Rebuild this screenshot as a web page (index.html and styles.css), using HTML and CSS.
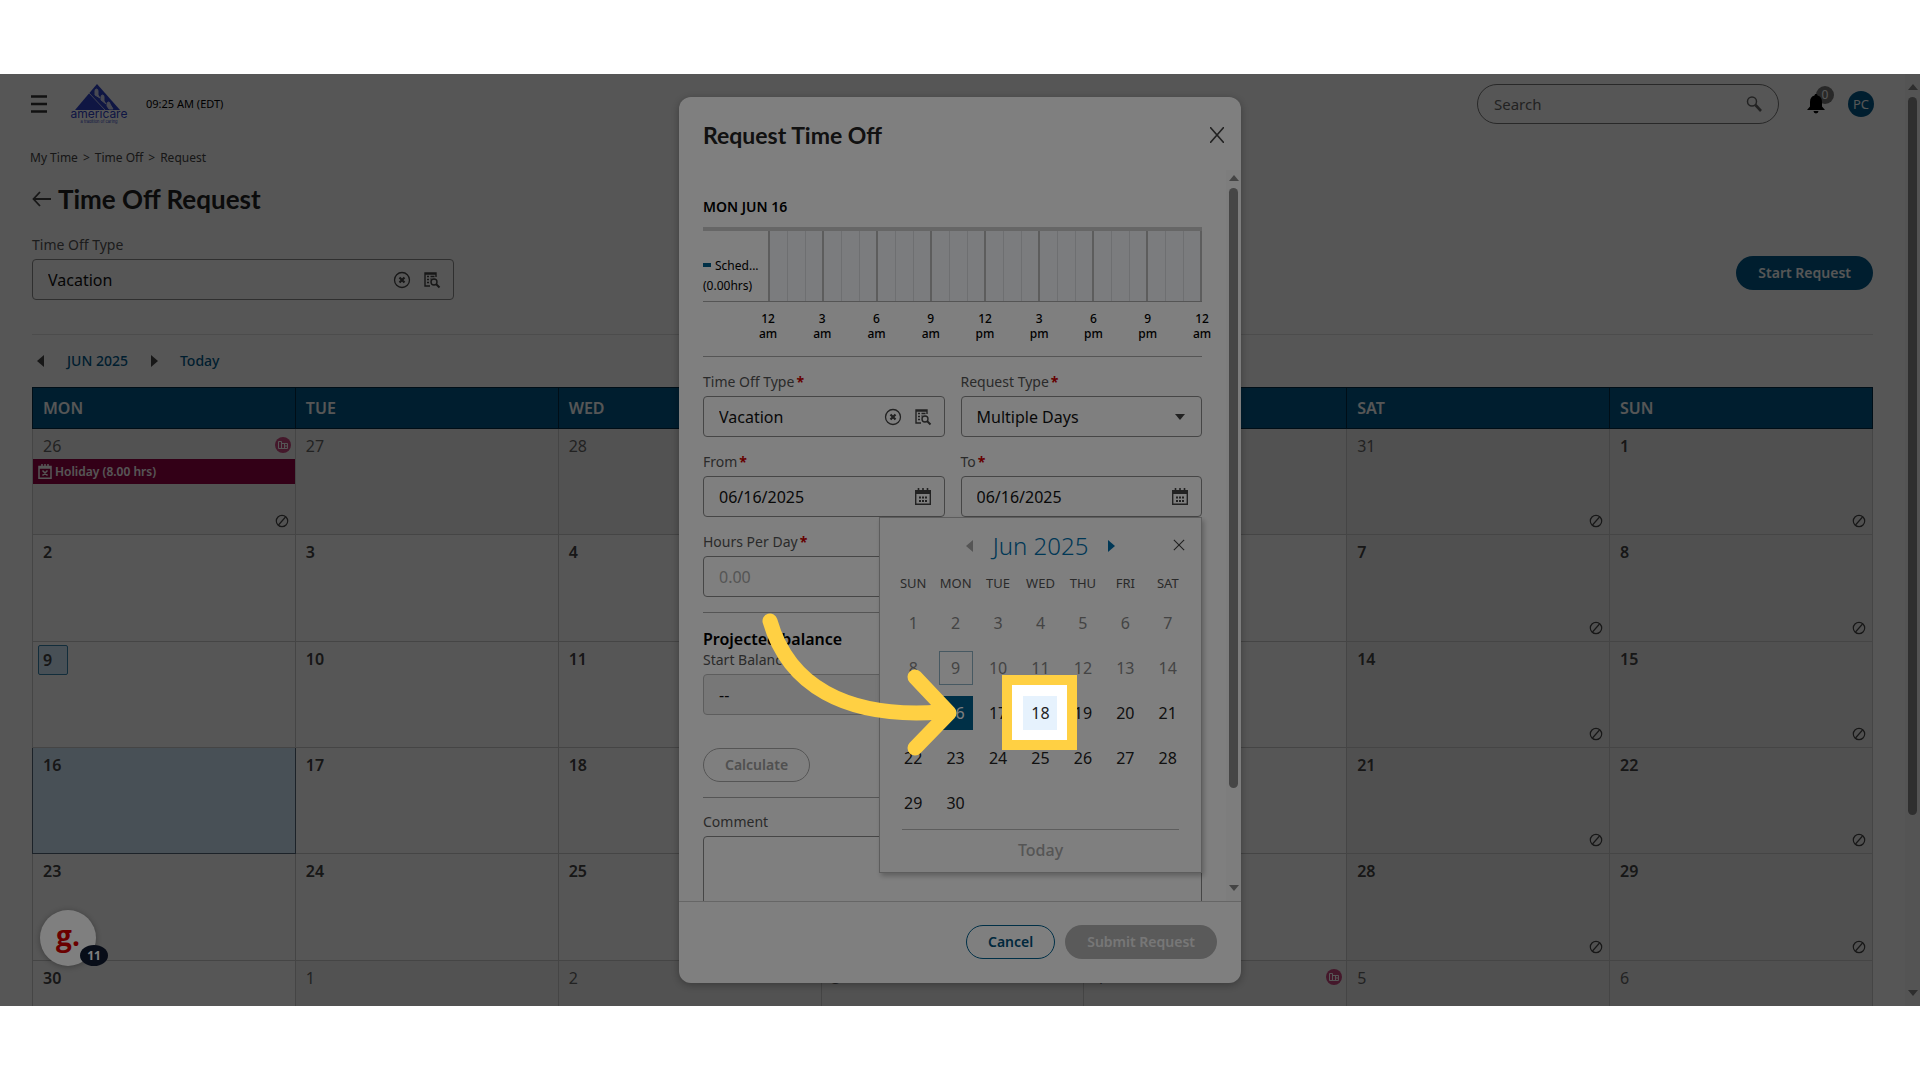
FILE: index.html
```html
<!DOCTYPE html>
<html lang="en">
<head>
<meta charset="utf-8">
<meta name="viewport" content="width=device-width, initial-scale=1">
<title>Time Off Request</title>
<link rel="stylesheet" href="styles.css">
</head>
<body>
<svg class="sprite" aria-hidden="true">
  <symbol id="i-clear" viewBox="0 0 18 18"><circle cx="9" cy="9" r="7.5" fill="none" stroke="currentColor" stroke-width="1.3"/><path d="M6.5 6.5l5 5M11.5 6.5l-5 5" stroke="currentColor" stroke-width="2.2"/></symbol>
  <symbol id="i-lookup" viewBox="0 0 18 18"><path d="M7 15H2V2h11v4M2 3h11" fill="none" stroke="currentColor" stroke-width="1.4"/><path d="M4 5.5h2M7.500 5.500h4M4 8.500h2M4 11.500h2M7.500 8h1" stroke="currentColor" stroke-width="1.400"/><circle cx="11" cy="11" r="3" fill="none" stroke="currentColor" stroke-width="1.400"/><path d="M13 13l3.500 3.500" stroke="currentColor" stroke-width="2"/></symbol>
  <symbol id="i-cal" viewBox="0 0 18 18"><path d="M1 2h16v4H1z" fill="currentColor"/><path d="M1.700 4v12.300h14.600V4" fill="none" stroke="currentColor" stroke-width="1.400"/><path d="M4.500 0v3M9 0v3M13.500 0v3" stroke="currentColor" stroke-width="1.600"/><path d="M5 9.500h2M8 9.500h2M11 9.500h2M5 13h2M8 13h2M11 13h2" stroke="currentColor" stroke-width="2.200"/></symbol>
  <symbol id="i-none" viewBox="0 0 14 14"><circle cx="7" cy="7" r="5.700" fill="none" stroke="currentColor" stroke-width="1.200"/><path d="M3.500 11L10.500 3" stroke="currentColor" stroke-width="1.200"/></symbol>
  <symbol id="i-hol" viewBox="0 0 16 16"><circle cx="8" cy="8" r="8" fill="#c9487f"/><path d="M3.500 11.500v-7h3v7M3.500 11.500h9v-5h-6M9.500 6.500v5M9.500 9h3" fill="none" stroke="#fff" stroke-width="1"/></symbol>
  <symbol id="i-x" viewBox="0 0 14 14"><path d="M1 1l12 12M13 1L1 13" stroke="currentColor" stroke-width="1.300"/></symbol>
  <symbol id="i-left" viewBox="0 0 8 12"><path d="M7 0v12L0 6z" fill="currentColor"/></symbol>
  <symbol id="i-right" viewBox="0 0 8 12"><path d="M1 0v12l7-6z" fill="currentColor"/></symbol>
  <symbol id="i-up" viewBox="0 0 10 6"><path d="M0 6h10L5 0z" fill="currentColor"/></symbol>
  <symbol id="i-down" viewBox="0 0 10 6"><path d="M0 0h10L5 6z" fill="currentColor"/></symbol>
</svg>
<div class="screen">
  <main class="page">
    <header class="topbar">
      <button class="icon-btn menu" aria-label="Menu"><svg width="16" height="18" viewBox="0 0 16 18"><path d="M0 1.500h16M0 9h16M0 16.500h16" stroke="currentColor" stroke-width="2.600"/></svg></button>
      <svg class="logo" width="62" height="42" viewBox="0 0 62 42" role="img" aria-label="americare">
        <path d="M6 27L28 1l23 26z" fill="#2d41c8"/>
        <path d="M20 10l16 17" stroke="#fff" stroke-width="1" opacity=".7"/>
        <path d="M26 12V8q0-2 1.500-2T29 8v4l2 3zM32 17v-3q0-2 1.500-2t1.500 2v4l2 3zM38 23v-2q0-2 1.500-2t1.500 2l3 5h-4z" fill="#fff" stroke="#fff" opacity=".8"/>
        <text x="30" y="35" text-anchor="middle" class="logo-name">americare</text>
        <text x="30" y="40" text-anchor="middle" class="logo-tag">a tradition of caring</text>
      </svg>
      <span class="clock">09:25 AM (EDT)</span>
      <label class="search"><input type="text" placeholder="Search" aria-label="Search">
        <svg width="18" height="18" viewBox="0 0 18 18"><circle cx="7" cy="6.500" r="4.500" fill="none" stroke="currentColor" stroke-width="1.500"/><path d="M10.500 10l5.500 6" stroke="currentColor" stroke-width="2.600"/></svg></label>
      <button class="icon-btn bell" aria-label="Notifications"><svg width="18" height="20" viewBox="0 0 18 20"><path d="M9 0c1 0 1.500.7 1.500 1.500C13.500 2 15 4.500 15 8v4.500l3 3.500H0l3-3.500V8c0-3.500 1.500-6 4.500-6.500C7.500.7 8 0 9 0zM6.500 17h5a2.500 2.500 0 0 1-5 0z" fill="currentColor"/></svg><span class="count">0</span></button>
      <button class="avatar">PC</button>
    </header>
    <nav class="crumbs"><a href="#">My Time</a><span>&gt;</span><a href="#">Time Off</a><span>&gt;</span><a href="#">Request</a></nav>
    <div class="title-row">
      <button class="icon-btn" aria-label="Back"><svg width="20" height="16" viewBox="0 0 20 16"><path d="M8 1L1.500 8 8 15M2 8h17" fill="none" stroke="currentColor" stroke-width="1.800"/></svg></button>
      <h1>Time Off Request</h1>
    </div>
    <div class="filters">
      <div class="field type-filter">
        <label for="type">Time Off Type</label>
        <div class="control"><input id="type" type="text" value="Vacation"><svg width="18" height="18"><use href="#i-clear"/></svg><svg width="18" height="18"><use href="#i-lookup"/></svg></div>
      </div>
      <button class="pill primary">Start Request</button>
    </div>
    <div class="month-nav">
      <button class="icon-btn" aria-label="Previous month"><svg width="8" height="12"><use href="#i-left"/></svg></button>
      <a href="#">JUN 2025</a>
      <button class="icon-btn" aria-label="Next month"><svg width="8" height="12"><use href="#i-right"/></svg></button>
      <a href="#">Today</a>
    </div>
    <table class="month">
      <thead><tr><th>MON</th><th>TUE</th><th>WED</th><th>THU</th><th>FRI</th><th>SAT</th><th>SUN</th></tr></thead>
      <tbody>
        <tr><td class="out"><span class="num">26</span><svg class="hol"><use href="#i-hol"/></svg>
          <div class="event"><svg width="14" height="15" viewBox="0 0 14 15"><path d="M1 2.500h12v11.800H1zM1 4h12M4 0v3M7 0v3M10 0v3M4.500 6.500l5 5M9.500 6.500l-5 5" fill="none" stroke="currentColor" stroke-width="1.500"/></svg>Holiday (8.00 hrs)</div>
          <svg class="none"><use href="#i-none"/></svg></td>
          <td class="out"><span class="num">27</span></td><td class="out"><span class="num">28</span></td><td class="out"><span class="num">29</span></td><td class="out"><span class="num">30</span></td>
          <td class="out off"><span class="num">31</span><svg class="none"><use href="#i-none"/></svg></td><td class="off"><span class="num">1</span><svg class="none"><use href="#i-none"/></svg></td></tr>
        <tr><td><span class="num">2</span></td><td><span class="num">3</span></td><td><span class="num">4</span></td><td><span class="num">5</span></td><td><span class="num">6</span></td>
          <td class="off"><span class="num">7</span><svg class="none"><use href="#i-none"/></svg></td><td class="off"><span class="num">8</span><svg class="none"><use href="#i-none"/></svg></td></tr>
        <tr><td><span class="num today">9</span></td><td><span class="num">10</span></td><td><span class="num">11</span></td><td><span class="num">12</span></td><td><span class="num">13</span></td>
          <td class="off"><span class="num">14</span><svg class="none"><use href="#i-none"/></svg></td><td class="off"><span class="num">15</span><svg class="none"><use href="#i-none"/></svg></td></tr>
        <tr><td class="picked"><span class="num">16</span></td><td><span class="num">17</span></td><td><span class="num">18</span></td><td><span class="num">19</span></td><td><span class="num">20</span></td>
          <td class="off"><span class="num">21</span><svg class="none"><use href="#i-none"/></svg></td><td class="off"><span class="num">22</span><svg class="none"><use href="#i-none"/></svg></td></tr>
        <tr><td><span class="num">23</span></td><td><span class="num">24</span></td><td><span class="num">25</span></td><td><span class="num">26</span></td><td><span class="num">27</span></td>
          <td class="off"><span class="num">28</span><svg class="none"><use href="#i-none"/></svg></td><td class="off"><span class="num">29</span><svg class="none"><use href="#i-none"/></svg></td></tr>
        <tr><td><span class="num">30</span></td><td class="out"><span class="num">1</span></td><td class="out"><span class="num">2</span></td><td class="out"><span class="num">3</span></td><td class="out"><span class="num">4</span><svg class="hol"><use href="#i-hol"/></svg></td>
          <td class="out off"><span class="num">5</span></td><td class="out off"><span class="num">6</span></td></tr>
      </tbody>
    </table>
  </main>
  <div class="scrollbar page-scroll"><svg width="10" height="6"><use href="#i-up"/></svg><div class="track"><div class="thumb"></div></div><svg width="10" height="6"><use href="#i-down"/></svg></div>

  <div class="backdrop">
    <section class="modal" role="dialog" aria-labelledby="dlg-title">
      <header class="modal-head"><h2 id="dlg-title">Request Time Off</h2><button class="icon-btn" aria-label="Close"><svg width="14" height="16" viewBox="0 0 14 14" preserveAspectRatio="none"><path d="M0 0l14 14M14 0L0 14" stroke="currentColor" stroke-width="1.500"/></svg></button></header>
      <div class="modal-main">
        <form class="modal-body">
          <h3 class="day">MON JUN 16</h3>
          <div class="chart">
            <div class="legend"><span class="series">Sched...</span><span>(0.00hrs)</span></div>
            <div class="hours"><i></i><i></i><i></i><i></i><i></i><i></i><i></i><i></i></div>
          </div>
          <div class="ticks"><span>12<br>am</span><span>3<br>am</span><span>6<br>am</span><span>9<br>am</span><span>12<br>pm</span><span>3<br>pm</span><span>6<br>pm</span><span>9<br>pm</span><span>12<br>am</span></div>
          <hr>
          <div class="grid">
            <div class="field"><label for="m-type">Time Off Type<b>*</b></label>
              <div class="control"><input id="m-type" type="text" value="Vacation"><svg width="18" height="18"><use href="#i-clear"/></svg><svg width="18" height="18"><use href="#i-lookup"/></svg></div></div>
            <div class="field"><label for="m-req">Request Type<b>*</b></label>
              <div class="control drop"><select id="m-req"><option>Multiple Days</option></select><svg width="10" height="6"><use href="#i-down"/></svg></div></div>
            <div class="field"><label for="m-from">From<b>*</b></label>
              <div class="control"><input id="m-from" type="text" value="06/16/2025"><svg width="18" height="18"><use href="#i-cal"/></svg></div></div>
            <div class="field anchor"><label for="m-to">To<b>*</b></label>
              <div class="control"><input id="m-to" type="text" value="06/16/2025"><svg width="18" height="18"><use href="#i-cal"/></svg></div>
              <div class="picker">
                <div class="picker-head"><button type="button" class="icon-btn dim" aria-label="Previous"><svg width="8" height="12"><use href="#i-left"/></svg></button><span class="picker-month">Jun 2025</span><button type="button" class="icon-btn next" aria-label="Next"><svg width="8" height="12"><use href="#i-right"/></svg></button><button type="button" class="icon-btn close" aria-label="Close calendar"><svg width="12" height="12"><use href="#i-x"/></svg></button></div>
                <div class="week"><span>SUN</span><span>MON</span><span>TUE</span><span>WED</span><span>THU</span><span>FRI</span><span>SAT</span></div>
                <div class="days">
                  <button type="button" disabled>1</button><button type="button" disabled>2</button><button type="button" disabled>3</button><button type="button" disabled>4</button><button type="button" disabled>5</button><button type="button" disabled>6</button><button type="button" disabled>7</button>
                  <button type="button" disabled>8</button><button type="button" disabled class="now">9</button><button type="button" disabled>10</button><button type="button" disabled>11</button><button type="button" disabled>12</button><button type="button" disabled>13</button><button type="button" disabled>14</button>
                  <button type="button" disabled>15</button><button type="button" class="sel">16</button><button type="button">17</button><button type="button" class="hover">18</button><button type="button">19</button><button type="button">20</button><button type="button">21</button>
                  <button type="button">22</button><button type="button">23</button><button type="button">24</button><button type="button">25</button><button type="button">26</button><button type="button">27</button><button type="button">28</button>
                  <button type="button">29</button><button type="button">30</button>
                </div>
                <div class="picker-foot"><button type="button" disabled>Today</button></div>
              </div></div>
            <div class="field"><label for="m-hours">Hours Per Day<b>*</b></label>
              <div class="control"><input id="m-hours" type="text" placeholder="0.00"></div></div>
          </div>
          <hr>
          <h3 class="projected">Projected balance</h3>
          <div class="field balance"><label for="m-start">Start Balance</label>
            <div class="control disabled"><input id="m-start" type="text" value="--" disabled></div></div>
          <button type="button" class="pill calc" disabled>Calculate</button>
          <hr>
          <div class="field"><label for="m-comment">Comment</label><textarea id="m-comment" rows="5"></textarea></div>
        </form>
        <div class="scrollbar modal-scroll"><svg width="10" height="6"><use href="#i-up"/></svg><div class="track"><div class="thumb"></div></div><svg width="10" height="6"><use href="#i-down"/></svg></div>
      </div>
      <footer class="modal-foot"><button class="pill outline">Cancel</button><button class="pill muted" disabled>Submit Request</button></footer>
    </section>
  </div>

  <button class="launcher" aria-label="Guides">g.<span>11</span></button>

  <div class="tour">
    <div class="spot"></div>
    <svg class="arrow" width="200" height="156" viewBox="0 0 200 156"><path d="M10 11C28 74 84 109 180 102" fill="none" stroke="#ffd043" stroke-width="15" stroke-linecap="round"/><path d="M155 67l34 36-34 35" fill="none" stroke="#ffd043" stroke-width="15" stroke-linecap="round" stroke-linejoin="round"/></svg>
  </div>
</div>
</body>
</html>
```
FILE: styles.css
```css
* { box-sizing: border-box; }
body { margin: 0; padding: 74px 0; background: #fff; color: #222; font: 16px/20px "Noto Sans", sans-serif; }
h1, h2, h3 { margin: 0; }
button, input, select, textarea { font: inherit; color: inherit; }
a { color: inherit; text-decoration: none; }
svg { display: block; flex: none; }
.sprite { position: absolute; width: 0; height: 0; }
.icon-btn { display: flex; align-items: center; justify-content: center; padding: 0; border: 0; background: none; color: #444; }

.screen { position: relative; display: flex; height: calc(100vh - 148px); overflow: hidden; }
.page { flex: 1; min-width: 0; padding: 10px 32px; }

/* top bar */
.topbar { display: flex; align-items: center; height: 40px; }
.menu { margin: 0 22px 0 -1px; color: #333; }
.logo-name { font: 12px Inter, sans-serif; fill: #2d41c8; }
.logo-tag { font: 4px Inter, sans-serif; fill: #2d41c8; }
.clock { margin-left: 15px; font-size: 11px; color: #000; }
.search { display: flex; align-items: center; width: 302px; height: 40px; margin-left: auto; padding: 0 15px 0 16px; border: 1px solid #777; border-radius: 20px; color: #666; }
.search input { flex: 1; min-width: 0; padding: 0; border: 0; outline: 0; background: none; font-size: 15px; }
.search input::placeholder { color: #666; opacity: 1; }
.bell { position: relative; z-index: 0; margin: 0 23px 0 28px; color: #000; }
.count { position: absolute; z-index: -1; left: 9px; top: -8px; width: 18px; height: 18px; border-radius: 50%; background: #777; color: #fff; font-size: 12px; line-height: 18px; }
.avatar { width: 26px; height: 26px; margin-right: -1px; padding: 0; border: 0; border-radius: 50%; background: #005b8d; color: #fff; font-size: 13px; }
.crumbs { display: flex; gap: 5px; margin-top: 24px; margin-left: -2px; font-size: 12px; color: #444; }
.title-row { display: flex; align-items: center; gap: 6px; height: 32px; margin-top: 15px; }
h1 { font: 700 26px/32px Lato, sans-serif; }

/* fields */
.field { display: flex; flex-direction: column; gap: 5px; min-width: 0; }
.field label { font-size: 14px; line-height: 18px; color: #555; }
.field label b { margin-left: 2px; color: #c00; }
.control { display: flex; align-items: center; gap: 12px; height: 41px; padding: 0 12px 0 15px; border: 1px solid #8c8c8c; border-radius: 4px; color: #444; }
.control input, .control select { flex: 1; min-width: 0; width: 100%; padding: 0; border: 0; outline: 0; background: none; color: #111; appearance: none; }
.control input::placeholder { color: #aaa; opacity: 1; }
.drop { padding-right: 16px; }
.disabled { border-color: #bbb; background: #eee; }
textarea { resize: none; border: 1px solid #8c8c8c; border-radius: 4px; background: none; }
.filters { display: flex; align-items: flex-end; justify-content: space-between; margin-top: 21px; padding-bottom: 34px; border-bottom: 1px solid #e2e2e2; }
.type-filter { width: 422px; }
.filters .pill { margin-bottom: 10px; }
.pill { height: 34px; padding: 0 21px; border: 1px solid transparent; border-radius: 17px; background: none; font-size: 14px; font-weight: 600; line-height: 20px; }
.primary { background: #005b8d; color: #fff; }

/* month calendar */
.month-nav { display: flex; align-items: center; gap: 22px; margin: 16px 0; padding-left: 5px; font-size: 14px; font-weight: 500; color: #005b8d; }
.month { width: 100%; height: 680px; table-layout: fixed; border-collapse: collapse; }
.month th { height: 41px; padding: 0 10px; border: 1px solid #002c45; background: #005b8d; color: #fff; font-weight: 600; text-align: left; }
.month td { position: relative; height: 106px; padding: 0; border: 1px solid #ccc; vertical-align: top; font-weight: 600; color: #444; }
.month .num { display: block; padding: 7px 10px 3px; }
.month .out { background: #f4f4f4; font-weight: 400; color: #666; }
.month .off { background: #eee; }
.month .picked { border: 1px solid #556677; background: #d6ecff; }
.month .today { width: 30px; margin: 3px 5px; padding: 4px; border: 1px solid #3586ae; border-radius: 2px; background: #d6ecff; }
.none { position: absolute; right: 6px; bottom: 6px; width: 14px; height: 14px; color: #444; }
.hol { position: absolute; right: 4px; top: 8px; width: 16px; height: 16px; }
.event { display: flex; align-items: center; gap: 3px; height: 25px; padding-left: 5px; background: #990046; color: #fff; font-size: 12px; font-weight: 600; }

/* scroll bars */
.scrollbar { display: flex; flex-direction: column; align-items: center; gap: 7px; width: 15px; padding: 10px 0; background: #fafafa; color: #888; }
.track { flex: 1; }
.thumb { width: 9px; border-radius: 5px; background: #8c8c8c; }
.page-scroll .thumb { height: 81%; }
.modal-scroll { padding: 5px 0 10px; }
.modal-scroll .thumb { height: 87%; }

/* dialog */
.backdrop { position: absolute; inset: 0; display: flex; justify-content: center; padding: 23px 0; background: rgba(0, 0, 0, .32); }
.modal { display: flex; flex-direction: column; width: 562px; max-width: 100%; border-radius: 12px; background: #fff; box-shadow: 0 2px 8px rgba(0, 0, 0, .3); }
.modal-head { display: flex; align-items: center; justify-content: space-between; height: 73px; padding: 3px 17px 0 24px; }
h2 { font: 700 23px/28px Lato, sans-serif; }
.modal-main { display: flex; flex: 1; min-height: 0; }
.modal-body { flex: 1; min-width: 0; padding: 27px 24px 0; overflow: hidden; }
.day { margin-bottom: 10px; font-size: 14px; font-weight: 600; line-height: 20px; color: #000; }
.chart { display: flex; height: 75px; border-top: 4px solid #ccc; border-bottom: 1px solid #aaa; }
.legend { display: flex; flex-direction: column; justify-content: flex-end; width: 65px; padding-bottom: 5px; font-size: 12px; color: #000; }
.series::before { content: ""; display: inline-block; width: 8px; height: 4px; margin: 0 4px 4px 0; background: #00608f; vertical-align: middle; }
.hours { display: grid; flex: 1; grid-template-columns: repeat(8, 1fr); border-right: 2px solid #bbb; background: #f6f9fd; }
.hours i { border-left: 2px solid #bbb; background: repeating-linear-gradient(90deg, transparent 0 17px, #dcdee2 17px 18px); }
.ticks { display: flex; justify-content: space-between; margin: 9px -13px 13px 52px; font-size: 12px; line-height: 15px; font-weight: 500; text-align: center; color: #000; }
.ticks span { width: 26px; }
hr { height: 1px; margin: 15px 0; border: 0; background: #aaa; }
.ticks + hr { margin-bottom: 16px; }
.grid + hr { margin-bottom: 16px; }
.grid { display: grid; grid-template-columns: 1fr 1fr; gap: 16px; }
.anchor { position: relative; }
.projected { margin-bottom: 2px; font-size: 16px; font-weight: 600; line-height: 20px; color: #000; }
.balance { width: 242px; }
.calc { margin-top: 33px; border-color: #aaa; color: #a0a0a0; }
.modal-foot { display: flex; align-items: center; justify-content: flex-end; gap: 10px; height: 82px; padding: 0 24px 1px; border-top: 1px solid #ccc; }
.outline { border-color: #00608f; color: #00507a; }
.muted { background: #b4b4b4; color: #eee; }

/* date picker */
.picker { position: absolute; z-index: 1; right: 0; top: 100%; width: 323px; padding: 10px 12px; border: 1px solid #bbb; background: #fff; box-shadow: 2px 3px 5px rgba(0, 0, 0, .25); }
.picker-head { position: relative; display: flex; align-items: center; justify-content: center; gap: 19px; height: 36px; }
.picker-head .dim { color: #aaa; }
.picker-head .next { color: #0070ad; }
.picker-head .close { position: absolute; right: 4px; top: 11px; }
.picker-month { font-size: 24px; font-weight: 300; line-height: 32px; color: #0070ad; }
.week, .days { display: grid; grid-template-columns: repeat(7, 1fr); text-align: center; }
.week { margin: 9px 0 7px; font-size: 13px; color: #555; }
.days { grid-auto-rows: 45px; place-items: center; }
.days button { width: 34px; height: 34px; padding: 0; border: 1px solid transparent; background: none; color: #222; }
.days button:disabled { color: #888; }
.days .now { border-color: #8fb3c4; }
.days .sel { background: #00608f; color: #fff; }
.days .hover { background: #e6f2fd; }
.picker-foot { margin: 4px 10px 0; padding-top: 8px; border-top: 1px solid #bbb; text-align: center; }
.picker-foot button { padding: 0; border: 0; background: none; color: #aaa; font-weight: 500; line-height: 24px; }

/* floating guide button */
.launcher { position: absolute; left: 40px; bottom: 40px; width: 56px; height: 56px; padding: 0 0 6px; border: 0; border-radius: 50%; background: #fff; color: #d40000; font: 700 28px/40px "Open Sans", sans-serif; box-shadow: 0 1px 6px rgba(0, 0, 0, .3); }
.launcher span { position: absolute; left: 40px; bottom: 0; width: 28px; height: 21px; border-radius: 50%; background: #101a30; color: #fff; font-size: 12px; line-height: 21px; }

/* tour layer: the spotlight darkens everything round it */
.tour { position: absolute; z-index: 2; inset: 0; pointer-events: none; }
.spot { position: absolute; left: calc(50% + 42px); top: 601px; width: 75px; height: 75px; border: 10px solid #ffd043; box-shadow: 0 0 0 200vmax rgba(0, 0, 0, .5); }
.arrow { position: absolute; left: calc(50% - 200px); top: 536px; }
```
